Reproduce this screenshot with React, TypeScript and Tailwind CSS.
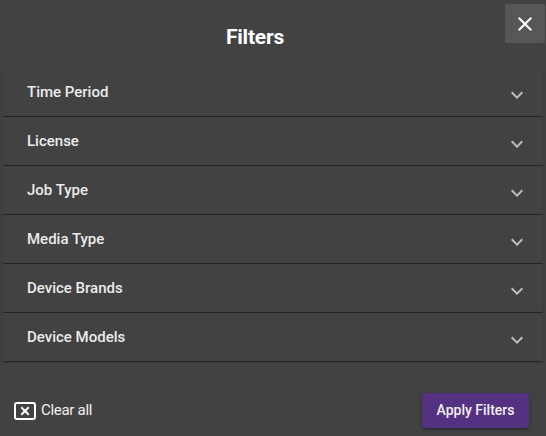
import * as React from "react";

const FILTERS = ["Time Period", "License", "Job Type", "Media Type", "Device Brands", "Device Models"];

function ExpandMore(): React.JSX.Element {
    return (
        <svg viewBox="0 0 24 24" className="mt-[6px] h-6 w-6 fill-[#bdbdbd]">
            <path d="M16.59 8.59 12 13.17 7.41 8.59 6 10l6 6 6-6z" />
        </svg>
    );
}

function CloseIcon(): React.JSX.Element {
    return (
        <svg viewBox="0 0 24 24" className="h-6 w-6 fill-white">
            <path d="M19 6.41 17.59 5 12 10.59 6.41 5 5 6.41 10.59 12 5 17.59 6.41 19 12 13.41 17.59 19 19 17.59 13.41 12z" />
        </svg>
    );
}

function ClearIcon(): React.JSX.Element {
    return (
        <svg viewBox="0 0 22 18" className="h-[18px] w-[22px]" fill="none" stroke="white">
            <rect x="1" y="1" width="20" height="16" rx="2" strokeWidth="2" />
            <path d="M8 6 14 12M14 6 8 12" strokeWidth="2" strokeLinecap="square" />
        </svg>
    );
}

export default function App(): React.JSX.Element {
    return (
        <div
            className="relative flex h-[436px] w-[546px] flex-col bg-[#424242] text-white"
            style={{ fontFamily: "Roboto, 'Noto Sans', sans-serif" }}
        >
            <button className="absolute right-[1px] top-[4px] flex h-[39px] w-[40px] items-center justify-center rounded-[2px] bg-[#575757]">
                <CloseIcon />
            </button>

            <div className="flex h-[68px] items-center justify-center pr-[36px] pt-[8px]">
                <h2 className="text-[21px] font-bold tracking-[-0.2px]">Filters</h2>
            </div>

            <div className="flex flex-col gap-px px-[3px]">
                {FILTERS.map((f) => (
                    <div
                        key={f}
                        className="flex h-[48px] items-center justify-between bg-[#424242] pl-[24px] pr-[14px] shadow-[0_2px_1px_-1px_rgba(0,0,0,0.25),0_1px_1px_0_rgba(0,0,0,0.18),0_1px_3px_0_rgba(0,0,0,0.12)]"
                    >
                        <span className="text-[15px] font-medium text-[#ebebeb]">{f}</span>
                        <ExpandMore />
                    </div>
                ))}
            </div>

            <div className="mt-auto flex items-center justify-between pl-[14px] pr-[17px] pb-[8px]">
                <button className="flex items-center gap-[5px] text-[15px] text-[#f0f0f0]">
                    <ClearIcon />
                    <span className="-tracking-[0.3px]">Clear all</span>
                </button>
                <button className="h-[35px] w-[107px] rounded-[3px] bg-[#553181] text-[14px] font-medium text-[#f0f0f0] shadow-[0_3px_1px_-2px_rgba(0,0,0,0.2),0_2px_2px_0_rgba(0,0,0,0.14),0_1px_5px_0_rgba(0,0,0,0.12)]">
                    Apply Filters
                </button>
            </div>
        </div>
    );
}
